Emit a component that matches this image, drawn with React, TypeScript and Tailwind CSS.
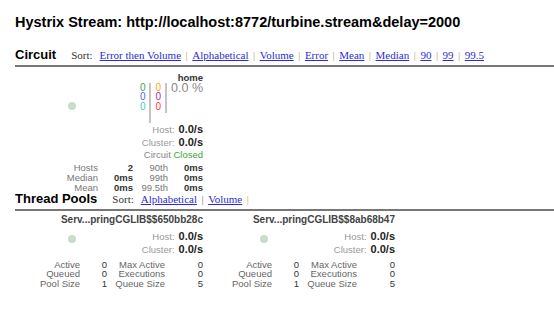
const circuitSorts = ["Error then Volume", "Alphabetical", "Volume", "Error", "Mean", "Median", "90", "99", "99.5"];

function SortBar({ items, seps, trailing }: { items: string[]; seps: string[]; trailing?: boolean }) {
  return (
    <div className="ml-[15px] flex items-baseline font-['Liberation_Serif',serif] text-[11px] leading-[16px] text-[#333]">
      <span className="mr-[7px]">Sort:</span>
      {items.map((item, i) => (
        <span key={item} className="flex items-baseline">
          <a href="#" className="text-[#2b2bd9] underline">
            {item}
          </a>
          {(i < items.length - 1 || trailing) && (
            <span className="mx-[4.5px]" style={{ color: seps[i % seps.length] }}>
              |
            </span>
          )}
        </span>
      ))}
    </div>
  );
}

function SectionHeader({ title, children }: { title: string; children: React.ReactNode }) {
  return (
    <div className="flex h-[20px] items-start border-b-2 border-[#777]">
      <span className="text-[13px] font-bold leading-[16px] text-black">{title}</span>
      {children}
    </div>
  );
}

function Rate({ label, value }: { label: string; value: string }) {
  return (
    <div className="flex items-baseline justify-end whitespace-nowrap leading-[13px]">
      <span className="text-[9.5px] text-[#999]">{label}:</span>
      <span className="ml-[4px] text-[11px] font-bold text-[#222]">{value}</span>
    </div>
  );
}

function Dot() {
  return <div className="h-[8px] w-[8px] rounded-full bg-[#cadbca]" />;
}

function CircuitCard() {
  const rows = [
    ["Hosts", "2", "90th", "0ms"],
    ["Median", "0ms", "99th", "0ms"],
    ["Mean", "0ms", "99.5th", "0ms"],
  ];
  return (
    <div className="h-[124.5px] w-[192px] pr-[4px] pt-[5px]">
      <div className="flex">
        <div className="flex-1 pl-[53px] pt-[30.5px]">
          <Dot />
        </div>
        <div className="flex flex-col items-end">
          <div className="text-[9.5px] font-bold leading-[11px] text-[#333]">home</div>
          <div className="flex text-[10px] leading-[9.5px]">
            <div className="flex flex-col items-end">
              <span className="text-[#3ea23e]">0</span>
              <span className="text-[#5a5aff]">0</span>
              <span className="text-[#2fd6b0]">0</span>
            </div>
            <div className="mx-[4px] h-[40px] w-[2px] bg-[#c4c4c4]" />
            <div className="flex flex-col items-end">
              <span className="text-[#ffa020]">0</span>
              <span className="text-[#a030c0]">0</span>
              <span className="text-[#ff3b3b]">0</span>
            </div>
            <div className="mx-[4px] h-[30px] w-[2px] bg-[#c4c4c4]" />
            <div className="mt-[-0.5px] text-[12.5px] leading-[13px] text-[#888]">0.0 %</div>
          </div>
          <Rate label="Host" value="0.0/s" />
          <Rate label="Cluster" value="0.0/s" />
          <div className="whitespace-nowrap text-[9.5px] leading-[12px] text-[#888]">
            Circuit <span className="text-[#3ba53b]">Closed</span>
          </div>
        </div>
      </div>
      <div className="ml-auto mt-[2px] w-[140px] whitespace-nowrap text-[9.5px] leading-[10px]">
        {rows.map((r) => (
          <div key={r[0]} className="grid grid-cols-4 text-right">
            <span className="text-[#777]">{r[0]}</span>
            <span className="font-bold text-[#333]">{r[1]}</span>
            <span className="text-[#777]">{r[2]}</span>
            <span className="font-bold text-[#333]">{r[3]}</span>
          </div>
        ))}
      </div>
    </div>
  );
}

function PoolCard({ name }: { name: string }) {
  const rows = [
    ["Active", "0", "Max Active", "0"],
    ["Queued", "0", "Executions", "0"],
    ["Pool Size", "1", "Queue Size", "5"],
  ];
  return (
    <div className="w-[192px] pr-[4px] pt-[3px]">
      <div className="whitespace-nowrap text-right text-[10px] font-bold leading-[12px] text-[#444]">{name}</div>
      <div className="mt-[4px] flex">
        <div className="flex-1 pl-[53px] pt-[5px]">
          <Dot />
        </div>
        <div className="flex flex-col items-end">
          <Rate label="Host" value="0.0/s" />
          <Rate label="Cluster" value="0.0/s" />
        </div>
      </div>
      <div className="ml-auto mt-[3.5px] w-[163px] whitespace-nowrap text-[9.5px] leading-[9.5px]">
        {rows.map((r) => (
          <div key={r[0]} className="grid grid-cols-[40px_27px_58px_38px] text-right">
            <span className="text-[#666]">{r[0]}</span>
            <span className="text-[#333]">{r[1]}</span>
            <span className="text-[#666]">{r[2]}</span>
            <span className="text-[#333]">{r[3]}</span>
          </div>
        ))}
      </div>
    </div>
  );
}

export default function App() {
  return (
    <div className="min-h-[321px] bg-white pl-[15px] pt-[13px] font-['Liberation_Sans',Arial,sans-serif]">
      <h1 className="text-[14.5px] font-bold leading-[18px] text-black">
        Hystrix Stream: http://localhost:8772/turbine.stream&amp;delay=2000
      </h1>
      <div className="mt-[15.5px]">
        <SectionHeader title="Circuit">
          <SortBar items={circuitSorts} seps={["#b9a27f"]} />
        </SectionHeader>
      </div>
      <CircuitCard />
      <SectionHeader title="Thread Pools">
        <SortBar items={["Alphabetical", "Volume"]} seps={["#a05aa0", "#e0a040"]} trailing />
      </SectionHeader>
      <div className="flex">
        <PoolCard name="Serv...pringCGLIB$$650bb28c" />
        <PoolCard name="Serv...pringCGLIB$$8ab68b47" />
      </div>
    </div>
  );
}
